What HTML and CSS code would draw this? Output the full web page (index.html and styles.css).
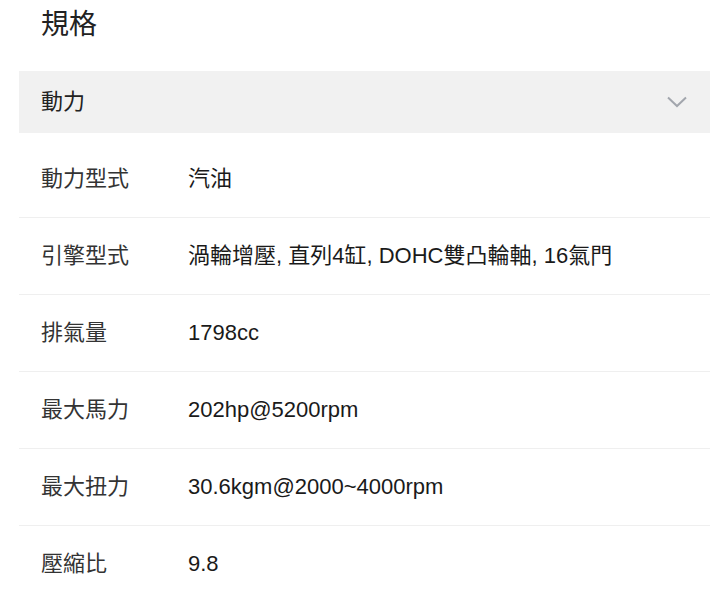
FILE: index.html
```html
<!DOCTYPE html>
<html lang="zh-Hant">
<head>
  <meta charset="UTF-8">
  <meta name="viewport" content="width=device-width, initial-scale=1.0">
  <title>規格</title>
  <link rel="stylesheet" href="styles.css">
</head>
<body>
  <div class="spec">
    <h2 class="spec-title">規格</h2>

    <div class="group-header">
      <span>動力</span>
      <svg class="chevron" width="20" height="12" viewBox="0 0 20 12">
        <path d="M1 1.5 L10 10 L19 1.5" fill="none" stroke="#a2a6ad" stroke-width="2"/>
      </svg>
    </div>

    <div class="rows">
      <div class="row">
        <div class="label">動力型式</div>
        <div class="value">汽油</div>
      </div>
      <div class="row">
        <div class="label">引擎型式</div>
        <div class="value">渦輪增壓, 直列4缸, DOHC雙凸輪軸, 16氣門</div>
      </div>
      <div class="row">
        <div class="label">排氣量</div>
        <div class="value">1798cc</div>
      </div>
      <div class="row">
        <div class="label">最大馬力</div>
        <div class="value">202hp@5200rpm</div>
      </div>
      <div class="row">
        <div class="label">最大扭力</div>
        <div class="value">30.6kgm@2000~4000rpm</div>
      </div>
      <div class="row">
        <div class="label">壓縮比</div>
        <div class="value">9.8</div>
      </div>
    </div>
  </div>
</body>
</html>
```

FILE: styles.css
```css
body {
  margin: 0;
  padding: 0;
  background: #fff;
  font-family: 'Liberation Sans', 'Noto Sans CJK TC', sans-serif;
  color: #222;
}

.spec {
  margin: 0 10px 0 19px;
}

.spec-title {
  margin: 0 0 21px;
  padding-left: 22px;
  height: 50px;
  line-height: 50px;
  font-size: 28px;
  font-weight: 400;
  color: #222;
}

.group-header {
  display: flex;
  align-items: center;
  justify-content: space-between;
  height: 62px;
  padding: 0 23px 0 22px;
  background: #f1f1f1;
  font-size: 22px;
  line-height: 26px;
  color: #222;
}

.chevron {
  display: block;
}

.rows {
  margin-top: 8px;
}

.row {
  display: flex;
  align-items: center;
  height: 76px;
  padding-left: 22px;
  border-bottom: 1px solid #efefef;
  font-size: 22px;
  line-height: 26px;
}

.row:last-child {
  border-bottom: none;
}

.label {
  width: 147px;
  flex-shrink: 0;
  color: #333;
}

.value {
  color: #1a1a1a;
}
```
